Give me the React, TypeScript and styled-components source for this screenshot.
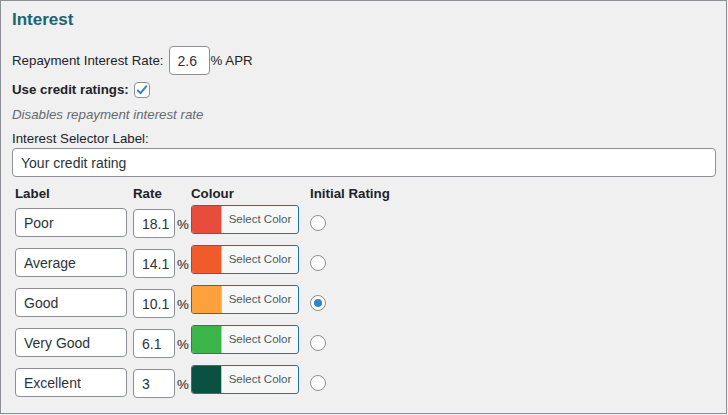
import React from "react";
import styled, { createGlobalStyle } from "styled-components";

const Global = createGlobalStyle`
  html, body { margin: 0; padding: 0; background: #f0f0f1; }
  body { font-family: "Liberation Sans", Arial, sans-serif; color: #1d2327; }
  * { box-sizing: border-box; }
`;

const Panel = styled.section`
  width: 727px;
  height: 414px;
  border: 1px solid #8c8f94;
  background: #f0f0f1;
  padding: 9px 10px 0 11px;
  display: flex;
  flex-direction: column;
`;

const Title = styled.h2`
  margin: 0;
  font-size: 17px;
  line-height: 20px;
  font-weight: 700;
  color: #1b6571;
`;

const Line = styled.div`
  display: flex;
  align-items: center;
  font-size: 13.3px;
  line-height: 18px;
  color: #1d2327;
  margin-top: ${(p: { $mt?: number }) => p.$mt ?? 0}px;
`;

const BoldLabel = styled.span`
  font-weight: 700;
`;

const Hint = styled.div`
  font-size: 13.3px;
  line-height: 18px;
  font-style: italic;
  color: #646970;
  margin-top: 7px;
`;

const TextInput = styled.input<{ $w?: number; $pr?: number }>`
  width: ${(p) => (p.$w ? `${p.$w}px` : "100%")};
  height: 29px;
  border: 1px solid #8c8f94;
  border-radius: 4px;
  background: #fff;
  padding: 0 ${(p) => p.$pr ?? 8}px 0 8px;
  font-family: "Liberation Sans", Arial, sans-serif;
  font-size: 14px;
  color: #2c3338;
  outline: none;
  margin: 0;
`;

const InlineInput = styled(TextInput)`
  margin: 0 1px 0 5px;
`;

const Check = styled.span`
  display: inline-flex;
  align-items: center;
  justify-content: center;
  width: 16px;
  height: 16px;
  margin-left: 5px;
  border: 1px solid #8c8f94;
  border-radius: 4px;
  background: #fff;
`;

const Grid = styled.div`
  display: grid;
  grid-template-columns: 118px 58px 119px 1fr;
  padding-left: 3px;
`;

const HeadCell = styled.div`
  font-size: 13.3px;
  line-height: 18px;
  font-weight: 700;
  color: #1d2327;
`;

const Header = styled(Grid)`
  margin-top: 8px;
`;

const Row = styled(Grid)`
  height: 40px;
  align-items: start;
`;

const Cell = styled.div<{ $mt?: number }>`
  display: flex;
  align-items: center;
  margin-top: ${(p) => p.$mt ?? 0}px;
`;

const Percent = styled.span`
  font-size: 13.3px;
  color: #1d2327;
  margin-left: 2px;
  line-height: 29px;
  padding-top: 2px;
`;

const ColorButton = styled.button`
  display: flex;
  align-items: stretch;
  width: 108px;
  height: 29px;
  padding: 0;
  border: 1px solid #2271b1;
  border-radius: 3px;
  background: #f6f7f7;
  overflow: hidden;
  cursor: pointer;
`;

const Swatch = styled.span<{ $c: string }>`
  width: 30px;
  background: ${(p) => p.$c};
  border-right: 1px solid #c3c4c7;
`;

const ButtonText = styled.span`
  flex: 1;
  display: flex;
  align-items: center;
  justify-content: center;
  font-family: "Liberation Sans", Arial, sans-serif;
  font-size: 11.5px;
  color: #50575e;
  padding-bottom: 2px;
`;

const Radio = styled.span<{ $on?: boolean }>`
  display: inline-flex;
  align-items: center;
  justify-content: center;
  width: 16px;
  height: 16px;
  border: 1px solid #8c8f94;
  border-radius: 50%;
  background: #fff;
  &::after {
    content: "";
    display: ${(p) => (p.$on ? "block" : "none")};
    width: 8px;
    height: 8px;
    border-radius: 50%;
    background: #3582c4;
  }
`;

const Rows = styled.div`
  display: flex;
  flex-direction: column;
  margin-top: 2px;
`;

const ratings = [
  { label: "Poor", rate: "18.1", color: "#e74c3c", on: false },
  { label: "Average", rate: "14.1", color: "#f15a2a", on: false },
  { label: "Good", rate: "10.1", color: "#fba23c", on: true },
  { label: "Very Good", rate: "6.1", color: "#3bb54a", on: false },
  { label: "Excellent", rate: "3", color: "#0b5142", on: false },
];

export default function App() {
  return (
    <>
      <Global />
      <Panel>
        <Title>Interest</Title>
        <Line $mt={16}>
          Repayment Interest Rate:
          <InlineInput $w={41} value="2.6" readOnly />% APR
        </Line>
        <Line $mt={6}>
          <BoldLabel>Use credit ratings:</BoldLabel>
          <Check role="checkbox" aria-checked="true">
            <svg width="14" height="14" viewBox="0 0 14 14">
              <path
                d="M2.8 7.4 L5.6 10.2 L11.4 3.2"
                fill="none"
                stroke="#3582c4"
                strokeWidth="2"
                strokeLinecap="round"
                strokeLinejoin="round"
              />
            </svg>
          </Check>
        </Line>
        <Hint>Disables repayment interest rate</Hint>
        <Line $mt={6}>Interest Selector Label:</Line>
        <TextInput value="Your credit rating" readOnly />
        <Header>
          <HeadCell>Label</HeadCell>
          <HeadCell>Rate</HeadCell>
          <HeadCell>Colour</HeadCell>
          <HeadCell>Initial Rating</HeadCell>
        </Header>
        <Rows>
          {ratings.map((r) => (
            <Row key={r.label}>
              <Cell $mt={3}>
                <TextInput $w={112} value={r.label} readOnly />
              </Cell>
              <Cell $mt={3}>
                <TextInput $w={42} $pr={2} value={r.rate} readOnly />
                <Percent>%</Percent>
              </Cell>
              <Cell>
                <ColorButton type="button">
                  <Swatch $c={r.color} />
                  <ButtonText>Select Color</ButtonText>
                </ColorButton>
              </Cell>
              <Cell $mt={10}>
                <Radio $on={r.on} role="radio" aria-checked={r.on} />
              </Cell>
            </Row>
          ))}
        </Rows>
      </Panel>
    </>
  );
}
